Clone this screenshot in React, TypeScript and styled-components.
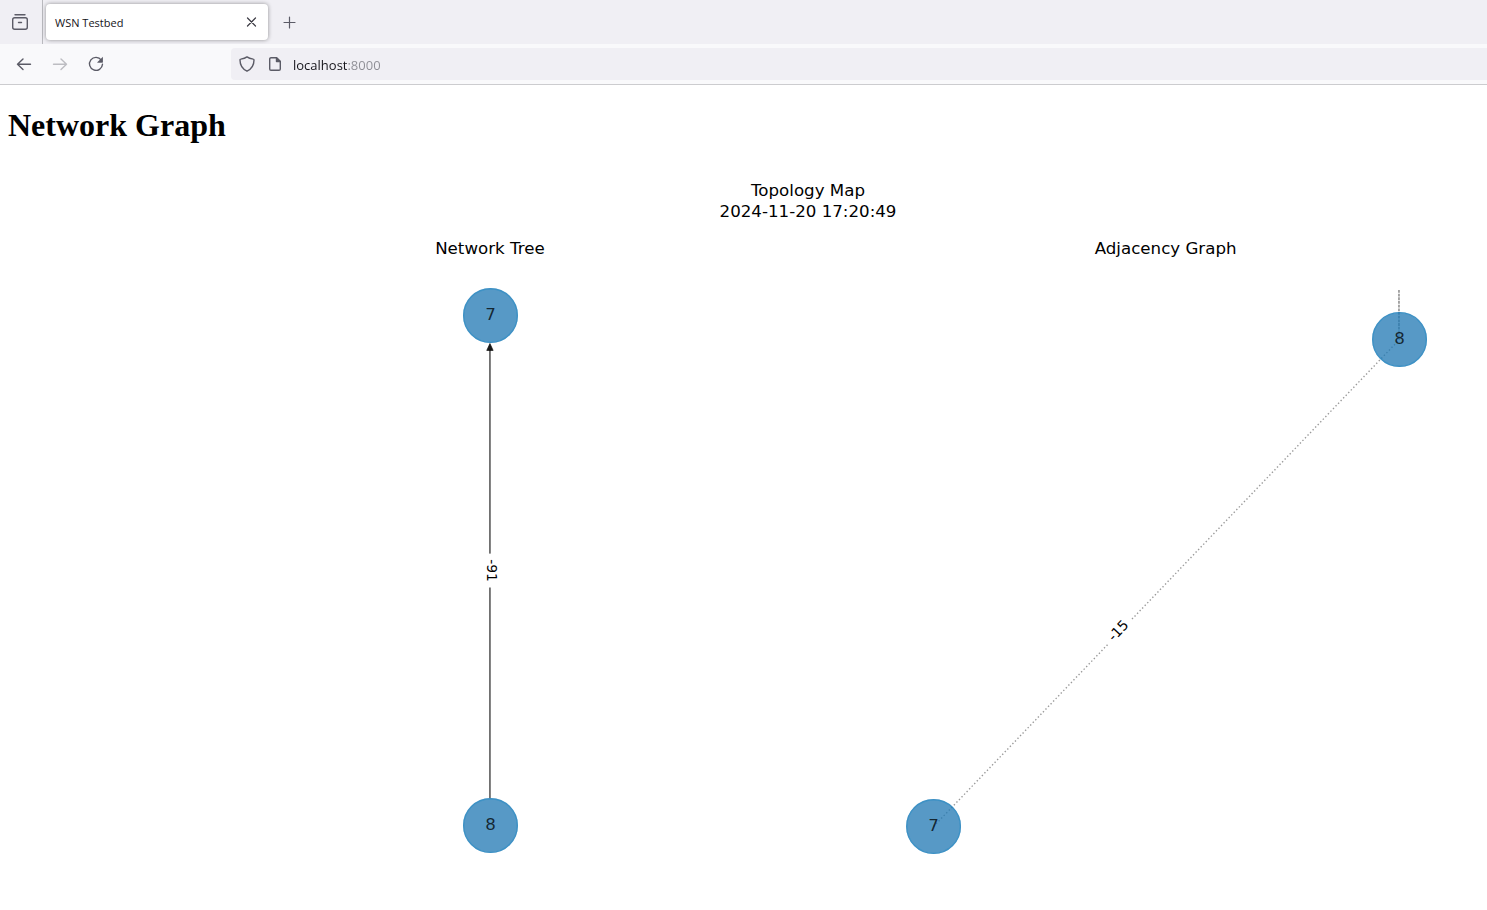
import React from "react";
import styled, { createGlobalStyle } from "styled-components";

const GlobalStyle = createGlobalStyle`
  *, *::before, *::after { box-sizing: border-box; }
  body { margin: 0; background: #fff; }
`;

const uiFont = `"Open Sans", "Noto Sans", sans-serif`;

const Window = styled.div`
  display: flex;
  flex-direction: column;
  height: 100vh;
  overflow: hidden;
`;

const TabStrip = styled.header`
  display: flex;
  flex: none;
  align-items: center;
  height: 44px;
  background: #f0eff4;
`;

const IconButton = styled.button<{ $size?: number }>`
  display: flex;
  flex: none;
  align-items: center;
  justify-content: center;
  width: ${({ $size = 36 }) => $size}px;
  height: ${({ $size = 36 }) => $size}px;
  padding: 0;
  border: 0;
  border-radius: 4px;
  background: none;
  color: #5b5b66;

  &:disabled {
    color: #bdbdc2;
  }
`;

const RecentTabs = styled.div`
  display: flex;
  align-items: center;
  height: 100%;
  padding: 0 4px 0 2px;
  border-right: 1px solid #b9b9be;
`;

const Tab = styled.div`
  display: flex;
  align-items: center;
  justify-content: space-between;
  width: 222px;
  height: 36px;
  margin: 0 3px;
  padding: 0 5px 0 9px;
  border-radius: 4px;
  background: #fff;
  box-shadow: 0 0 4px rgba(0, 0, 0, 0.4);
  color: #15141a;
  font: 11px/16px ${uiFont};
`;

const TabTitle = styled.span`
  padding-top: 2px;
`;

const Toolbar = styled.nav`
  display: flex;
  flex: none;
  align-items: center;
  height: 41px;
  padding-left: 6px;
  border-bottom: 1px solid #cccccf;
  background: #f9f9fb;
`;

const AddressBar = styled.label`
  display: flex;
  flex: 1;
  align-items: center;
  gap: 12px;
  height: 32px;
  margin-left: 117px;
  padding-left: 8px;
  border-radius: 4px 0 0 4px;
  background: #f0eff4;
  color: #5b5b66;
`;

const AddressInput = styled.input`
  flex: 1;
  min-width: 0;
  height: 22px;
  margin-left: -2px;
  padding: 2px 0 0;
  border: 0;
  outline: 0;
  background: linear-gradient(to right, #15141a 54px, #8d8d94 54px);
  background-clip: text;
  -webkit-text-fill-color: transparent;
  font: 13px/20px ${uiFont};
`;

const Page = styled.main`
  flex: 1;
  min-height: 0;
  padding: 0 8px;
  overflow: hidden;
`;

const Heading = styled.h1`
  margin: 22px 0 21px;
  color: #000;
  font: bold 32px/37px "Liberation Serif", serif;
`;

/* A 16in by 8in figure at 100 dpi, drawn in points. */
const Figure = styled.svg`
  display: block;
  width: 1600px;
  height: 800px;
`;

const FigureText = styled.text`
  font-family: "DejaVu Sans", sans-serif;
  font-size: 12px;
  text-anchor: middle;
`;

const EdgeText = styled(FigureText)`
  font-size: 10px;
`;

const Icon = ({ size = 20, children }: { size?: number; children: React.ReactNode }) => (
  <svg
    width={size}
    height={size}
    viewBox={`0 0 ${size} ${size}`}
    fill="none"
    stroke="currentColor"
    strokeWidth="1.4"
    strokeLinecap="round"
    strokeLinejoin="round"
    aria-hidden="true"
  >
    {children}
  </svg>
);

type NodeProps = { x: number; y: number; label: string };

const GraphNode = ({ x, y, label }: NodeProps) => (
  <g>
    <circle cx={x} cy={y} r="19.3" fill="#1f78b4" stroke="#1f78b4" strokeWidth="1" opacity="0.75" />
    <circle cx={x} cy={y} r="19.3" fill="none" stroke="#1f88c4" strokeWidth="1" opacity="0.45" />
    <FigureText x={x} y={y + 3.3} fillOpacity="0.75">
      {label}
    </FigureText>
  </g>
);

type EdgeLabelProps = { x: number; y: number; angle: number; label: string };

const EdgeLabel = ({ x, y, angle, label }: EdgeLabelProps) => (
  <g transform={`translate(${x} ${y}) rotate(${angle})`}>
    <rect x="-12.2" y="-8" width="24.4" height="16" fill="#fff" />
    <EdgeText y="3">{label}</EdgeText>
  </g>
);

export default function App() {
  return (
    <>
      <GlobalStyle />
      <Window>
        <TabStrip>
          <RecentTabs>
            <IconButton aria-label="Recent browsing">
              <Icon>
                <path d="M5 2.7h10" />
                <rect x="2.7" y="5.7" width="14.6" height="11.6" rx="2" />
                <path d="M8.5 10.5h3" />
              </Icon>
            </IconButton>
          </RecentTabs>
          <Tab>
            <TabTitle>WSN Testbed</TabTitle>
            <IconButton $size={24} aria-label="Close tab">
              <Icon size={16}>
                <path d="M4.500 4l8 8M12.500 4l-8 8" stroke="#3c3b44" strokeWidth="1.2" />
              </Icon>
            </IconButton>
          </Tab>
          <IconButton aria-label="New tab">
            <Icon>
              <path d="M10.500 5v11M5 10.500h11" strokeWidth="1.2" />
            </Icon>
          </IconButton>
        </TabStrip>
        <Toolbar>
          <IconButton aria-label="Back">
            <Icon>
              <path d="M16.500 10.300H3.500M9 5L3.500 10.300L9 15.600" />
            </Icon>
          </IconButton>
          <IconButton aria-label="Forward" disabled>
            <Icon>
              <path d="M3.500 10.300H16.500M11 5L16.500 10.300L11 15.600" />
            </Icon>
          </IconButton>
          <IconButton aria-label="Reload">
            <Icon>
              <path d="M15.300 6.100A6.500 6.500 0 1 0 16.500 10.300" />
              <path d="M16.500 3.800v4.500h-4.500z" fill="currentColor" strokeWidth="0.8" />
            </Icon>
          </IconButton>
          <AddressBar>
            <Icon size={16}>
              <path d="M8 .9c1.800 1.500 4 2 6.200 2.200c.6 0 .8.4.8.9c0 5-2.500 9-7 11.200C3.500 13 1 9 1 4c0-.5.2-.9.8-.9C4 2.900 6.200 2.400 8 .9z" />
            </Icon>
            <Icon size={16}>
              <path d="M9.500 1.700H4A1.300 1.300 0 0 0 2.700 3v10A1.300 1.300 0 0 0 4 14.300h8A1.300 1.300 0 0 0 13.300 13V5.500z" />
              <path d="M9.500 1.700v3.800h3.800z" fill="currentColor" />
            </Icon>
            <AddressInput type="text" aria-label="Address" defaultValue="localhost:8000" />
          </AddressBar>
        </Toolbar>
        <Page>
          <Heading>Network Graph</Heading>
          <Figure viewBox="0 0 1152 576" role="img" aria-label="Topology map">
            <FigureText x="576" y="22">Topology Map</FigureText>
            <FigureText x="576" y="37.4">2024-11-20 17:20:49</FigureText>

            <FigureText x="347" y="64">Network Tree</FigureText>
            <path d="M347 456V133" stroke="#000" strokeOpacity="0.75" fill="none" />
            <path d="M347 128.500l2.300 5h-4.600z" stroke="#000" strokeWidth="0.6" fillOpacity="0.9" strokeOpacity="0.75" />
            <EdgeLabel x={348} y={292} angle={90} label="-91" />
            <GraphNode x={347.400} y={108.400} label="7" />
            <GraphNode x={347.400} y={475.600} label="8" />

            <FigureText x="833.500" y="64">Adjacency Graph</FigureText>
            <g stroke="#000" fill="none">
              <path d="M666.400 476.300L1001.900 125.600" strokeOpacity="0.4" strokeDasharray="1 1.65" />
              <path d="M1001.500 90V125.600" strokeOpacity="0.5" strokeDasharray="2 0.65" />
            </g>
            <EdgeLabel x={799.600} y={335.500} angle={-46} label="-15" />
            <GraphNode x={666.400} y={476.300} label="7" />
            <GraphNode x={1001.900} y={125.600} label="8" />
          </Figure>
        </Page>
      </Window>
    </>
  );
}
